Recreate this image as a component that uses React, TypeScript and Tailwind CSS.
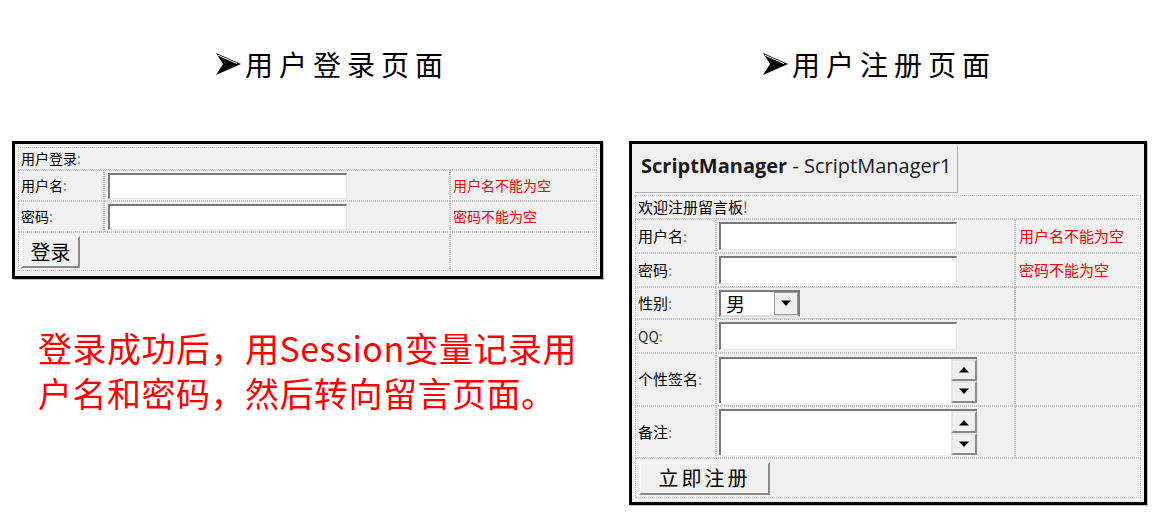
import React from 'react';

const cjk = { fontFamily: '"Noto Sans CJK SC", "Noto Sans", sans-serif' };

const cell = "border border-dotted border-[#c4c4c4]";

function TextBox({ w, h }: { w: number; h: number }) {
  return (
    <div
      className="bg-white border-t-2 border-l-2 border-t-[#7a7a7a] border-l-[#7a7a7a] border-b border-r border-b-[#e8e8e8] border-r-[#e8e8e8]"
      style={{ width: w, height: h }}
    />
  );
}

function Triangle({ up }: { up?: boolean }) {
  return (
    <svg width="12" height="7" viewBox="0 0 12 7">
      {up ? <path d="M1 6.5 L6 1 L11 6.5 Z" fill="#000" /> : <path d="M1 0.5 L6 6 L11 0.5 Z" fill="#000" />}
    </svg>
  );
}

function SpinButton({ up }: { up?: boolean }) {
  return (
    <div className="flex-1 flex items-center justify-center bg-[#f0f0f0] border-2 border-t-[#e6e6e6] border-l-[#e6e6e6] border-b-[#8a8a8a] border-r-[#8a8a8a]">
      <Triangle up={up} />
    </div>
  );
}

function MultiBox() {
  return (
    <div className="flex w-[258px] h-[46px] bg-white border-t-2 border-l-2 border-t-[#7a7a7a] border-l-[#7a7a7a]">
      <div className="flex-1" />
      <div className="flex flex-col w-[26px]">
        <SpinButton up />
        <SpinButton />
      </div>
    </div>
  );
}

// 3D arrowhead bullet
function Bullet() {
  return (
    <svg width="27" height="24" viewBox="0 0 27 24" className="mr-[3px]">
      <path d="M1 1 L26 12 L1 23 L8 12 Z" fill="#000" />
      <path d="M3 3.2 L22 11.6" stroke="#fff" strokeWidth="1" />
    </svg>
  );
}

function Title({ text }: { text: string }) {
  return (
    <div className="flex items-center text-[28px] leading-[40px] text-black" style={cjk}>
      <Bullet />
      <span className="tracking-[6px]">{text}</span>
    </div>
  );
}

function LoginBox() {
  return (
    <div className="w-[591px] h-[138px] border-[3px] border-black bg-[#f0f0f0] p-[3px] shadow-[1px_1px_0_#bdbdbd]" style={cjk}>
      <div className="grid grid-cols-[86px_346px_147px] grid-rows-[23px_31px_31px_39px] text-[14px] text-black">
        <div className={`${cell} col-span-3 flex items-center pl-[2px]`}>用户登录<span className="text-[#8a7a5a]">:</span></div>
        <div className={`${cell} flex items-center pl-[2px]`}>用户名<span className="text-[#8a7a5a]">:</span></div>
        <div className={`${cell} flex items-center pl-[3px]`}><TextBox w={239} h={26} /></div>
        <div className={`${cell} flex items-center pl-[2px] text-[#ff0000]`}>用户名不能为空</div>
        <div className={`${cell} flex items-center pl-[2px]`}>密码<span className="text-[#8a7a5a]">:</span></div>
        <div className={`${cell} flex items-center pl-[3px]`}><TextBox w={239} h={26} /></div>
        <div className={`${cell} flex items-center pl-[2px] text-[#ff0000]`}>密码不能为空</div>
        <div className={`${cell} col-span-2 flex items-center pl-[2px]`}>
          <button className="w-[59px] h-[32px] bg-[#f0f0f0] text-[20px] leading-none border-2 border-t-[#f8f8f8] border-l-[#f8f8f8] border-b-[#8a8a8a] border-r-[#8a8a8a]" style={cjk}>登录</button>
        </div>
        <div className={cell} />
      </div>
    </div>
  );
}

function RegisterBox() {
  return (
    <div className="w-[518px] h-[364px] border-[3px] border-black bg-[#f0f0f0] px-[3px] pt-[2px] shadow-[1px_1px_0_#bdbdbd]" style={cjk}>
      <div className="flex">
        <div className="w-[323px] h-[47px] flex items-center pl-[6px] pb-[6px] border border-[#b0b0b0] border-t-0 border-l-0 text-[20px] text-[#1a1a1a]" style={{ fontFamily: '"Open Sans", "Noto Sans", sans-serif' }}>
          <span className="font-bold">ScriptManager</span>
          <span>&nbsp;- ScriptManager1</span>
        </div>
      </div>
      <div className="mt-[2px] grid grid-cols-[81px_299px_126px] grid-rows-[24px_34px_34px_32px_34px_53px_52px_40px] text-[15px] text-black">
        <div className={`${cell} col-span-3 flex items-center pl-[2px]`}>欢迎注册留言板<span className="text-[#cc3333]">!</span></div>

        <div className={`${cell} flex items-center pl-[2px]`}>用户名<span className="text-[#8a7a5a]">:</span></div>
        <div className={`${cell} flex items-center pl-[2px]`}><TextBox w={238} h={28} /></div>
        <div className={`${cell} flex items-center pl-[3px] text-[15px] text-[#ff0000]`}>用户名不能为空</div>

        <div className={`${cell} flex items-center pl-[2px]`}>密码<span className="text-[#8a7a5a]">:</span></div>
        <div className={`${cell} flex items-center pl-[2px]`}><TextBox w={238} h={28} /></div>
        <div className={`${cell} flex items-center pl-[3px] text-[15px] text-[#ff0000]`}>密码不能为空</div>

        <div className={`${cell} flex items-center pl-[2px]`}>性别<span className="text-[#8a7a5a]">:</span></div>
        <div className="border border-[#cfcfcf] flex items-center pl-[2px]">
          <div className="flex items-center w-[81px] h-[27px] bg-white border-2 border-t-[#7a7a7a] border-l-[#7a7a7a] border-b-[#dcdcdc] border-r-[#7a7a7a]">
            <span className="flex-1 pl-[5px] text-[19px] leading-none">男</span>
            <div className="w-[24px] h-[23px] flex items-center justify-center bg-[#f0f0f0] border border-[#9a9a9a]">
              <Triangle />
            </div>
          </div>
        </div>
        <div className={cell} />

        <div className={`${cell} flex items-center pl-[2px] text-[14px] text-[#333]`}>QQ<span className="text-[#8a7a5a]">:</span></div>
        <div className={`${cell} flex items-center pl-[2px]`}><TextBox w={238} h={28} /></div>
        <div className={cell} />

        <div className={`${cell} flex items-center pl-[2px]`}>个性签名<span className="text-[#8a7a5a]">:</span></div>
        <div className={`${cell} flex items-center pl-[2px]`}><MultiBox /></div>
        <div className={cell} />

        <div className={`${cell} flex items-center pl-[2px]`}>备注<span className="text-[#8a7a5a]">:</span></div>
        <div className={`${cell} flex items-center pl-[2px]`}><MultiBox /></div>
        <div className={cell} />

        <div className={`${cell} col-span-3 flex items-center pl-[3px]`}>
          <button className="w-[131px] h-[33px] bg-[#f0f0f0] text-[20px] leading-none tracking-[3px] border-2 border-t-[#f8f8f8] border-l-[#f8f8f8] border-b-[#8a8a8a] border-r-[#8a8a8a]" style={cjk}>立即注册</button>
        </div>
      </div>
    </div>
  );
}

export default function App() {
  return (
    <div className="w-[1166px] h-[520px] bg-white flex overflow-hidden">
      <div className="ml-[12px] w-[591px] flex flex-col">
        <div className="h-[141px] pt-[44px] pl-[203px]">
          <Title text="用户登录页面" />
        </div>
        <LoginBox />
        <div className="mt-[46px] pl-[26px] text-[34px] leading-[45px] tracking-[0.5px] text-[#ff0000]" style={cjk}>
          登录成功后，用Session变量记录用<br />户名和密码，然后转向留言页面。
        </div>
      </div>
      <div className="ml-[26px] w-[518px] flex flex-col">
        <div className="h-[141px] pt-[44px] pl-[133px]">
          <Title text="用户注册页面" />
        </div>
        <RegisterBox />
      </div>
    </div>
  );
}
